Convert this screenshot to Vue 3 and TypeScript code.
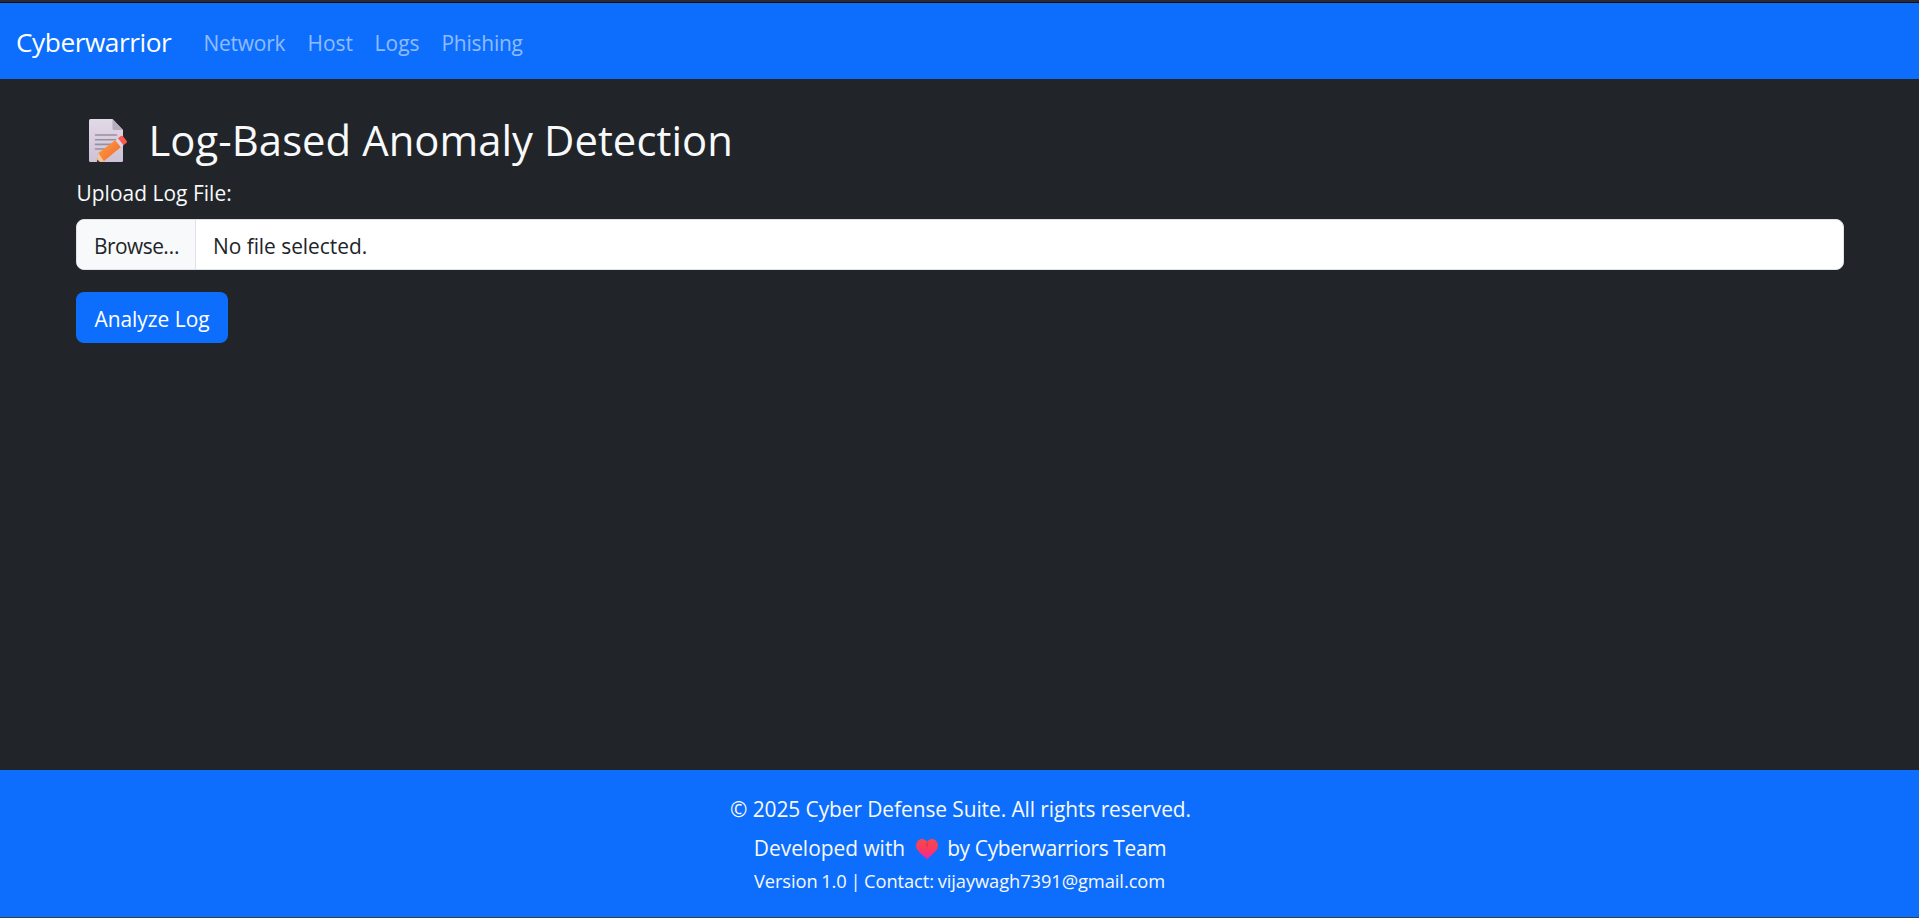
<script setup lang="ts">
import { ref } from 'vue'

interface NavLink {
  label: string
  key: string
}

const links: NavLink[] = [
  { label: 'Network', key: 'network' },
  { label: 'Host', key: 'host' },
  { label: 'Logs', key: 'logs' },
  { label: 'Phishing', key: 'phishing' },
]

const fileName = ref('No file selected.')
const picker = ref<HTMLInputElement | null>(null)

function onPick(event: Event) {
  const file = (event.target as HTMLInputElement).files?.[0]
  fileName.value = file ? file.name : 'No file selected.'
}
</script>

<template>
  <div class="page">
    <nav class="navbar">
      <a class="brand">Cyberwarrior</a>
      <a v-for="link in links" :key="link.key" class="link" :class="link.key">{{ link.label }}</a>
    </nav>

    <main class="content">
      <h1 class="title">
        <svg class="memo" viewBox="0 0 38 43" aria-hidden="true">
          <defs>
            <linearGradient id="paper" x1="0" y1="0" x2="0" y2="1">
              <stop offset="0" stop-color="#e2d9e6" />
              <stop offset="1" stop-color="#cdc2d6" />
            </linearGradient>
            <linearGradient id="pencil" x1="0" y1="0" x2="1" y2="1">
              <stop offset="0" stop-color="#ffa044" />
              <stop offset="1" stop-color="#f0652c" />
            </linearGradient>
            <clipPath id="sheet"><rect width="38" height="43" /></clipPath>
          </defs>
          <path d="M1.5 0H23.5L34 11V41.5Q34 43 32.5 43H1.5Q0 43 0 41.5V1.5Q0 0 1.5 0Z" fill="url(#paper)" />
          <path d="M23.5 0L34 11H25Q23.5 11 23.5 9.5Z" fill="#b6acbb" />
          <path d="M6.5 16H27.5M6.5 20.7H27.5M6.5 25.4H22M6.5 30H16" stroke="#98909f" stroke-width="1.6" stroke-linecap="round" />
          <g clip-path="url(#sheet)">
            <path d="M9.5 34L26.5 21L32 28L15 42L8 44.5Z" fill="url(#pencil)" />
            <path d="M9.5 34L15 42.2L12 43H8Z" fill="#f2c59b" />
            <path d="M8.3 40.5L11 43H7.8Z" fill="#5a3443" />
            <path d="M26.3 21.2L29 19.2L34.5 26.2L32 28.2Z" fill="#d9d5ec" />
            <path d="M29 19.2L31.5 17.3Q33 16.3 34.2 17.6L37.5 21.7Q38.5 23 37.3 24L34.5 26.2Z" fill="#fb5a4c" />
          </g>
        </svg>
        <span>Log-Based Anomaly Detection</span>
      </h1>

      <form @submit.prevent>
        <label class="label" for="log-file">Upload Log File:</label>
        <div class="file" @click="picker?.click()">
          <span class="browse">Browse…</span>
          <span class="filename">{{ fileName }}</span>
          <input id="log-file" ref="picker" type="file" hidden @change="onPick" />
        </div>
        <button class="submit" type="submit">Analyze Log</button>
      </form>
    </main>

    <footer class="footer">
      <p class="copyright">© 2025 Cyber Defense Suite. All rights reserved.</p>
      <p class="credit">
        <span class="developed">Developed with</span>
        <svg class="heart" viewBox="0 0 22 20" aria-hidden="true">
          <defs>
            <linearGradient id="love" x1="0" y1="0" x2="0" y2="1">
              <stop offset="0" stop-color="#f6484f" />
              <stop offset="0.5" stop-color="#f83a5c" />
              <stop offset="1" stop-color="#f324a4" />
            </linearGradient>
          </defs>
          <path d="M11 2.800C8.700-.7 4.200-.6 1.800 1.900C-.7 4.600-.3 8.500 1.700 11.200C4 14.300 7.400 16.600 10 19.200Q11 20.200 12 19.200C14.600 16.600 18 14.300 20.300 11.200C22.300 8.500 22.700 4.600 20.200 1.900C17.800-.6 13.300-.7 11 2.800Z" fill="url(#love)" />
          <path d="M11 2.800Q13.500 5.500 11 8.500Q9.500 5.500 11 2.800Z" fill="#c93343" opacity="0.6" />
        </svg>
        <span class="team">by Cyberwarriors Team</span>
      </p>
      <p class="contact">Version 1.0 | Contact: vijaywagh7391@gmail.com</p>
    </footer>
  </div>
</template>

<style>
body {
  margin: 0;
  overflow: hidden;
  background: #212529;
}
</style>

<style scoped>
.page {
  box-sizing: border-box;
  height: 918px;
  display: flex;
  flex-direction: column;
  border-top: 2px solid #2b2a33;
  border-bottom: 1px solid #2f4257;
  background: #212529;
  color: #f8f9fa;
  font-family: "Open Sans", "Noto Sans", sans-serif;
  font-size: 20.9px;
  line-height: 32px;
}

.navbar {
  box-sizing: border-box;
  height: 77px;
  padding-left: 16px;
  border-top: 1px solid #0c0c0d;
  display: grid;
  grid-template-columns: 187.5px 104px 67px 67px auto;
  align-items: center;
  background: #0d6efd;
  white-space: nowrap;
}

.brand {
  padding-top: 2px;
  color: #fff;
  font-size: 26.3px;
  letter-spacing: -0.48px;
}

.link {
  padding-top: 4px;
  color: rgba(255, 255, 255, 0.55);
  letter-spacing: -0.2px;
}

.link.host { letter-spacing: 0; }
.link.logs { letter-spacing: 0.1px; }

.content {
  flex: 1;
  padding: 35px 75px 0 76px;
}

.title {
  height: 51px;
  margin: 0 0 12px;
  padding-left: 13px;
  display: flex;
  align-items: center;
  font-size: 41.8px;
  font-weight: 400;
  line-height: 51px;
  letter-spacing: 0.05px;
}

.memo {
  width: 38px;
  height: 43px;
  margin: 2px 21.5px 0 0;
}

.label {
  display: block;
  margin-bottom: 10px;
  padding-left: 0.5px;
  letter-spacing: 0.05px;
}

.file {
  box-sizing: border-box;
  height: 51px;
  display: flex;
  overflow: hidden;
  border: 1px solid #dee2e6;
  border-radius: 8px;
  background: #fff;
  color: #212529;
}

.browse {
  box-sizing: border-box;
  width: 119px;
  padding: 10px 0 0 17px;
  border-right: 1px solid #dee2e6;
  background: #f8f9fa;
  letter-spacing: -0.52px;
}

.filename {
  padding: 10px 0 0 17px;
  letter-spacing: -0.03px;
}

.submit {
  display: block;
  box-sizing: border-box;
  width: 152px;
  height: 51px;
  margin-top: 22px;
  padding: 3px 0 0;
  border: 0;
  border-radius: 8px;
  background: #0d6efd;
  color: #fff;
  font: inherit;
  letter-spacing: 0;
}

.footer {
  box-sizing: border-box;
  height: 147px;
  padding-top: 23px;
  background: #0d6efd;
  text-align: center;
}

.footer p { margin: 0; }

.copyright {
  padding-left: 2px;
  letter-spacing: -0.07px;
}

.footer .credit {
  margin-top: 7px;
  padding-left: 1px;
  display: flex;
  justify-content: center;
}

.developed { letter-spacing: 0; }
.team { letter-spacing: -0.34px; }

.heart {
  width: 22px;
  height: 20px;
  margin: 7px 9.5px 0 10.5px;
}

.footer .contact {
  margin-top: 3px;
  font-size: 18.3px;
  line-height: 28px;
  letter-spacing: -0.07px;
  word-spacing: -1px;
}
</style>
